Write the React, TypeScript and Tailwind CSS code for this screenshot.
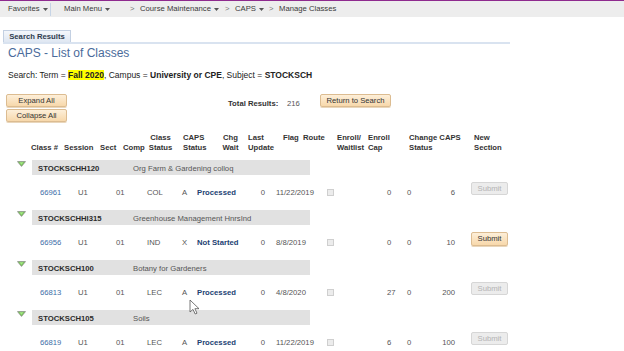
import React from 'react'

type ClassRow = {
  course: string
  title: string
  cls: string
  comp: string
  caps: string
  status: string
  date: string
  enroll: string
  cap: string
  active: boolean
}

const rows: ClassRow[] = [
  { course: 'STOCKSCHH120', title: 'Org Farm & Gardening colloq', cls: '66961', comp: 'COL', caps: 'A', status: 'Processed', date: '11/22/2019', enroll: '0', cap: '6', active: false },
  { course: 'STOCKSCHHI315', title: 'Greenhouse Management HnrsInd', cls: '66956', comp: 'IND', caps: 'X', status: 'Not Started', date: '8/8/2019', enroll: '0', cap: '10', active: true },
  { course: 'STOCKSCH100', title: 'Botany for Gardeners', cls: '66813', comp: 'LEC', caps: 'A', status: 'Processed', date: '4/8/2020', enroll: '27', cap: '200', active: false },
  { course: 'STOCKSCH105', title: 'Soils', cls: '66819', comp: 'LEC', caps: 'A', status: 'Processed', date: '11/22/2019', enroll: '6', cap: '100', active: false },
]

// two-line column headers; empty string keeps the line slot
const headers = [
  { top: '', bottom: 'Class #', cls: 'w-[33px]' },
  { top: '', bottom: 'Session', cls: 'w-[36px]' },
  { top: '', bottom: 'Sect', cls: 'w-[23px]' },
  { top: '', bottom: 'Comp', cls: 'w-[24px]' },
  { top: 'Class', bottom: 'Status', cls: 'w-[27px] mr-[9px] text-center' },
  { top: 'CAPS', bottom: 'Status', cls: 'w-[34px]' },
  { top: 'Chg', bottom: 'Wait', cls: 'w-[31px] text-center pr-[4px]' },
  { top: 'Last', bottom: 'Update', cls: 'w-[35px]' },
  { top: 'Flag', bottom: '', cls: 'w-[20px]' },
  { top: 'Route', bottom: '', cls: 'w-[34px]' },
  { top: 'Enroll/', bottom: 'Waitlist', cls: 'w-[31px]' },
  { top: 'Enroll', bottom: 'Cap', cls: 'w-[41px]' },
  { top: 'Change CAPS', bottom: 'Status', cls: 'w-[65px]' },
  { top: 'New', bottom: 'Section', cls: 'w-[40px]' },
]

function Caret() {
  return (
    <svg width="5" height="3" viewBox="0 0 5 3" className="ml-[3px] mt-[1px]">
      <path d="M0 0h5L2.5 3z" fill="#555" />
    </svg>
  )
}

function PeachButton({ children, className }: { children: React.ReactNode; className: string }) {
  return (
    <div
      className={`flex items-center justify-center h-[13px] border border-[#dcbc91] rounded-[2px] bg-linear-to-b from-[#fdefd9] to-[#f7d8ab] text-[#333] leading-[10px] shadow-[0_1px_0_#e9d6bb] ${className}`}
    >
      {children}
    </div>
  )
}

function Toggle() {
  return (
    <svg width="9" height="6" viewBox="0 0 9 6">
      <path d="M0.5 0.6h8L4.5 5.4z" fill="#74c94f" stroke="#8c8c8c" strokeWidth="0.8" strokeLinejoin="round" />
      <path d="M2.5 1.3h4L4.5 3.8z" fill="#a6e58a" />
    </svg>
  )
}

function Group({ row }: { row: ClassRow }) {
  return (
    <div>
      <div className="flex h-[15px]">
        <div className="w-[32px] pl-[17px] pt-[1px]">
          <Toggle />
        </div>
        <div className="flex w-[278px] h-[15px] pt-[4px] pl-[6px] bg-[#e1e1e1] leading-[10px]">
          <span className="w-[95px] font-bold text-[#2b2b2b]">{row.course}</span>
          <span className="text-[#555]">{row.title}</span>
        </div>
      </div>
      <div className="flex items-center h-[35px] pl-[40px] text-[#555] leading-[10px]">
        <span className="w-[38px] text-[#3b6ea8]">{row.cls}</span>
        <span className="w-[38px]">U1</span>
        <span className="w-[31px]">01</span>
        <span className="w-[35px]">{row.comp}</span>
        <span className="w-[15px]">{row.caps}</span>
        <span className="w-[58px] font-bold text-[#223f72]">{row.status}</span>
        <span className="w-[10px] text-right">0</span>
        <span className="w-[11px]" />
        <span className="w-[51px]">{row.date}</span>
        <span className="w-[7px] h-[7px] border border-[#cfcfcf] bg-[#ececec]" />
        <span className="w-[53px]" />
        <span className="w-[20px]">{row.enroll}</span>
        <span className="w-[10px]">0</span>
        <span className="w-[38px] text-right">{row.cap}</span>
        <span className="w-[16px]" />
        {row.active ? (
          <PeachButton className="w-[37px] h-[14px] mb-[8px]">Submit</PeachButton>
        ) : (
          <div className="flex items-center justify-center w-[37px] h-[13px] mb-[8px] border border-[#d6d6d6] rounded-[2px] bg-[#ececec] text-[#b3b3b3]">
            Submit
          </div>
        )}
      </div>
    </div>
  )
}

export default function App() {
  return (
    <div className="relative w-[624px] h-[351px] overflow-hidden bg-white font-['Liberation_Sans',Arial,sans-serif] text-[7.7px] text-[#333]">
      {/* top navigation */}
      <div className="flex items-center h-[17px] border-t border-[#8e2a8e] bg-[#ededed] leading-[10px] text-[#3a3a3a]">
        <div className="flex items-center w-[50px] pl-[8px]">
          Favorites
          <Caret />
        </div>
        <div className="w-px h-[13px] bg-[#c6d4e6]" />
        <div className="flex items-center w-[79px] pl-[13px]">
          Main Menu
          <Caret />
        </div>
        <div className="flex items-center w-[95px]">
          <span className="w-[10px] text-[#777]">&gt;</span>
          Course Maintenance
          <Caret />
        </div>
        <div className="flex items-center w-[44px]">
          <span className="w-[10px] text-[#777]">&gt;</span>
          CAPS
          <Caret />
        </div>
        <div className="flex items-center">
          <span className="w-[10px] text-[#777]">&gt;</span>
          Manage Classes
        </div>
      </div>

      {/* tab strip */}
      <div className="mt-[13px] ml-[3px] w-[507px] border-b-2 border-[#d9e3f0]">
        <div className="flex items-center justify-center w-[68px] h-[12px] border border-b-0 border-[#c3d0e2] bg-linear-to-b from-[#f4f7fb] to-[#dfe7f2] font-bold text-[#2e3b4e] leading-[10px]">
          Search Results
        </div>
      </div>

      <div className="mt-[2px] pl-[8px] text-[12px] leading-[14px] text-[#4a6b9b]">CAPS - List of Classes</div>

      <div className="mt-[10px] pl-[8px] text-[8.5px] leading-[11px] text-[#222]">
        Search: Term = <b className="bg-[#ffff00]">Fall 2020</b>, Campus = <b>University or CPE</b>, Subject ={' '}
        <b>STOCKSCH</b>
      </div>

      {/* actions */}
      <div className="flex mt-[13px]">
        <div className="flex flex-col gap-[2px] ml-[6px] w-[61px]">
          <PeachButton className="w-[61px]">Expand All</PeachButton>
          <PeachButton className="w-[61px]">Collapse All</PeachButton>
        </div>
        <div className="flex w-[92px] ml-[161px] mt-[5px] leading-[10px]">
          <span className="w-[59px] font-bold text-[#333]">Total Results:</span>
          <span className="text-[#555]">216</span>
        </div>
        <PeachButton className="w-[71px]">Return to Search</PeachButton>
      </div>

      {/* column headers */}
      <div className="flex mt-[11px] pl-[31px] font-bold leading-[10px] text-[#333] whitespace-nowrap">
        {headers.map((h, i) => (
          <div key={i} className={h.cls}>
            <div className="h-[10px]">{h.top}</div>
            <div className="h-[10px]">{h.bottom}</div>
          </div>
        ))}
      </div>

      <div className="mt-[7px]">
        {rows.map(r => (
          <Group key={r.cls} row={r} />
        ))}
      </div>

      {/* mouse pointer */}
      <svg className="absolute left-[189px] top-[299px]" width="11" height="16" viewBox="0 0 11 16">
        <path d="M1 1v12l3-2.6 2.2 4.6 1.8-.8-2.1-4.5H10z" fill="#fff" stroke="#555" strokeWidth="0.8" strokeLinejoin="round" />
      </svg>
    </div>
  )
}
